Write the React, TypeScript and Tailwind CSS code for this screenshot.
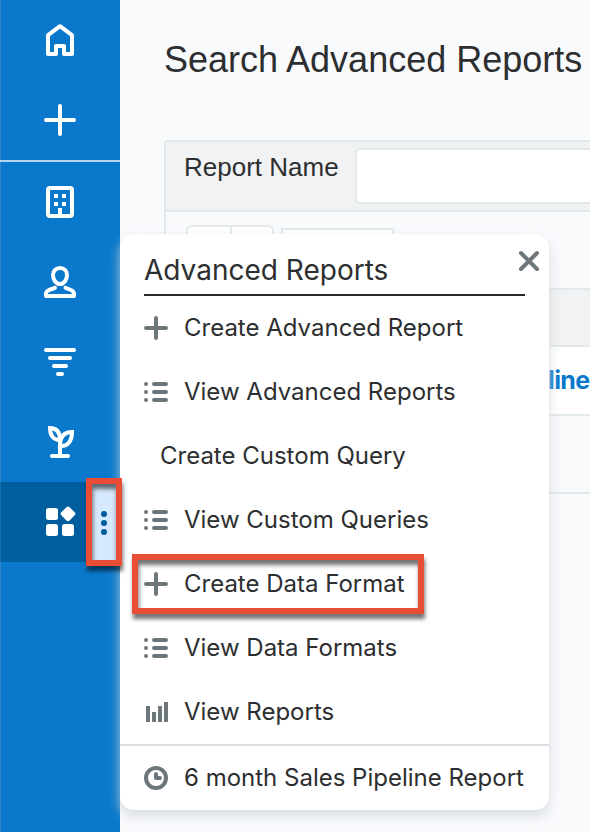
import type { ReactNode } from 'react';
import clsx from 'clsx';

const HomeIcon = () => (
    <svg className="h-8 w-8" viewBox="0 0 32 32" fill="none" stroke="white" strokeWidth="4" strokeLinejoin="round">
        <path d="M4 30V11.2L16 2.2L28 11.2V30H20V22H12V30Z" />
    </svg>
);

const AddIcon = () => (
    <svg className="h-8 w-8" viewBox="0 0 32 32" stroke="white" strokeWidth="4" strokeLinecap="round">
        <path d="M16 2V30M2 16H30" />
    </svg>
);

const BuildingIcon = () => (
    <svg className="h-8 w-8" viewBox="0 0 32 32" fill="none">
        <rect x="4" y="2" width="24" height="28" rx="2" stroke="white" strokeWidth="4" />
        <path d="M10 8h4v4h-4zM18 8h4v4h-4zM10 16h4v4h-4zM18 16h4v4h-4zM14 22h4v6h-4z" fill="white" />
    </svg>
);

const PersonIcon = () => (
    <svg className="h-8 w-8" viewBox="0 0 32 32" fill="none" stroke="white" strokeWidth="4" strokeLinecap="round" strokeLinejoin="round">
        <path d="M16 2C20 2 23 4.900 23 9C23 13.500 20 18 16 18C12 18 9 13.500 9 9C9 4.900 12 2 16 2Z" />
        <path d="M11 21.800L5 24Q2 25.200 2 28V30H30V28Q30 25.200 27 24L21.500 21.800" />
    </svg>
);

const FunnelIcon = () => (
    <svg className="h-8 w-8" viewBox="0 0 32 32" stroke="white" strokeWidth="4" strokeLinecap="round">
        <path d="M2 4H30M6 12H26M10 20H22M14 28H18" />
    </svg>
);

const PlantIcon = () => (
    <svg className="h-8 w-8" viewBox="0 0 32 32" fill="none" stroke="white" strokeWidth="4" strokeLinecap="round">
        <path d="M8 30H24M16 29V11" />
        <path d="M6 2C12 2 16 5.500 16 14C9.500 14 6 9.500 6 2Z" strokeLinecap="butt" />
        <path d="M28 6C20 6 16 10.500 16 20C23.500 21 28 15 28 6Z" strokeLinecap="butt" />
    </svg>
);

const AppsIcon = () => (
    <svg className="h-8 w-8" viewBox="0 0 32 32" fill="white">
        <rect x="2" y="2" width="12" height="12" rx="2.500" />
        <rect x="2" y="18" width="12" height="12" rx="2.500" />
        <rect x="18" y="18" width="12" height="12" rx="2.500" />
        <rect x="18.200" y="2" width="11.600" height="11.600" rx="2.200" transform="rotate(45 24 7.800)" />
    </svg>
);

const PlusIcon = () => (
    <svg className="h-6 w-6" viewBox="0 0 24 24" stroke="#6d767b" strokeWidth="4" strokeLinecap="round">
        <path d="M12 2V22M2 12H22" />
    </svg>
);

const ListIcon = () => (
    <svg className="h-6 w-6" viewBox="0 0 24 24" stroke="#6d767b" strokeWidth="4" strokeLinecap="round">
        <path d="M2 4H2.010M10 4H22M2 12H2.010M10 12H22M2 20H2.010M10 20H22" />
    </svg>
);

const ChartIcon = () => (
    <svg className="h-6 w-6" viewBox="0 0 24 24" fill="#6d767b">
        <path d="M2 6h4v16H2zM8 12h4v10H8zM14 6h4v16h-4zM20 2h4v20h-4z" />
    </svg>
);

const ClockIcon = () => (
    <svg className="h-6 w-6" viewBox="0 0 24 24" fill="none" stroke="#6d767b" strokeWidth="4">
        <circle cx="12" cy="12" r="10" />
        <path d="M12 8V12H16" strokeLinecap="round" strokeLinejoin="round" />
    </svg>
);

const navTop = [HomeIcon, AddIcon];
const navItems = [BuildingIcon, PersonIcon, FunnelIcon, PlantIcon];

type MenuItem = { label: string; icon?: ReactNode; highlighted?: boolean };

const menuItems: MenuItem[] = [
    { label: 'Create Advanced Report', icon: <PlusIcon /> },
    { label: 'View Advanced Reports', icon: <ListIcon /> },
    { label: 'Create Custom Query' },
    { label: 'View Custom Queries', icon: <ListIcon /> },
    { label: 'Create Data Format', icon: <PlusIcon />, highlighted: true },
    { label: 'View Data Formats', icon: <ListIcon /> },
    { label: 'View Reports', icon: <ChartIcon /> },
];

function Highlight({ className }: { className: string }) {
    return (
        <div
            className={clsx(
                'pointer-events-none absolute border-6 border-[#e94d35] shadow-[1px_5px_4px_rgba(0,0,0,0.55),inset_1px_5px_4px_rgba(0,0,0,0.55)]',
                className,
            )}
        />
    );
}

function Sidebar() {
    return (
        <nav className="flex w-[120px] shrink-0 flex-col bg-[#0a79cb] shadow-[inset_1px_0_0_#2f86cb]">
            <div className="border-b-2 border-[#b5d6f0]">
                {navTop.map((Icon, i) => (
                    <div key={i} className="flex h-20 items-center justify-center">
                        <Icon />
                    </div>
                ))}
            </div>
            {navItems.map((Icon, i) => (
                <div key={i} className="flex h-20 items-center justify-center">
                    <Icon />
                </div>
            ))}
            <div className="flex h-20 bg-[#005e9e] shadow-[inset_1px_0_0_#1a6ea8]">
                <div className="flex flex-1 items-center justify-end pr-3">
                    <AppsIcon />
                </div>
                <div className="flex w-8 flex-col items-center justify-center gap-[3px] bg-[#d6eaff] pt-0.5">
                    <span className="h-1.5 w-1.5 rounded-full bg-[#005e9e]" />
                    <span className="h-1.5 w-1.5 rounded-full bg-[#005e9e]" />
                    <span className="h-1.5 w-1.5 rounded-full bg-[#005e9e]" />
                </div>
            </div>
        </nav>
    );
}

function SearchPage() {
    return (
        <main className="min-w-0 flex-1 pl-11">
            <h1 className="h-[140px] pt-10 text-[36px] leading-10 whitespace-nowrap">Search Advanced Reports</h1>
            <div className="rounded-tl border-t-2 border-l-2 border-[#e2e9ea]">
                <div className="flex h-[70px] items-start border-b-2 border-[#e2e9ea] bg-[#f1f2f3] pt-1.5 pl-[18px]">
                    <label className="w-[171px] pt-1 text-[26px] leading-[30px]">Report Name</label>
                    <div className="h-14 flex-1 rounded-l-md border-2 border-r-0 border-[#e4e9eb] bg-white" />
                </div>
                <div className="flex h-[76px] items-start pt-[13px] pl-5">
                    <div className="flex h-12 w-[88px] rounded-md border-2 border-[#e4e9eb] bg-white">
                        <div className="w-[44px] border-r-2 border-[#e4e9eb]" />
                    </div>
                    <div className="mt-[3px] ml-[7px] h-11 w-[113px] border-2 border-[#e4e9eb] bg-white" />
                </div>
                <div className="h-[59px] border-y-2 border-[#e2e9ea] bg-[#f1f2f3]" />
                <div className="h-[69px] border-b-2 border-[#e2e9ea] bg-white pt-[17px] pl-[382px] font-[Inter,sans-serif] text-[25px] leading-8 font-bold tracking-tight text-[#0a79cb]">
                    line
                </div>
                <div className="h-[78px] border-b-2 border-[#e2e9ea]" />
            </div>
        </main>
    );
}

function ReportsMenu() {
    return (
        <div className="absolute top-[234px] left-[120px] h-[576px] w-[429px] rounded-[14px] bg-white font-[Inter,sans-serif] text-[24px] shadow-[0_6px_12px_#cfd5dacc]">
            <button className="absolute top-4 right-[9px]">
                <svg className="h-[22px] w-[22px]" viewBox="0 0 22 22" stroke="#6d767b" strokeWidth="4" strokeLinecap="round">
                    <path d="M3 3L19 19M19 3L3 19" />
                </svg>
            </button>
            <h2 className="mx-6 flex h-[62px] items-center border-b-2 border-[#29272a] pt-3 text-[28px]">Advanced Reports</h2>
            <ul>
                {menuItems.map((item) => (
                    <li key={item.label} className={clsx('relative flex h-16 items-center', item.icon ? 'gap-4 pl-6' : 'pl-10')}>
                        {item.icon}
                        <span className="whitespace-nowrap">{item.label}</span>
                        {item.highlighted && <Highlight className="top-[2px] left-3 h-[60px] w-[292px]" />}
                    </li>
                ))}
            </ul>
            <div className="flex h-[66px] items-center gap-4 border-t-2 border-[#d8dee2] pl-6">
                <ClockIcon />
                <span className="whitespace-nowrap">6 month Sales Pipeline Report</span>
            </div>
        </div>
    );
}

export default function App() {
    return (
        <div className="relative flex h-[832px] w-[590px] overflow-hidden bg-[#f9fafc] font-['Liberation_Sans',sans-serif] text-[#2d2e30]">
            <Sidebar />
            <SearchPage />
            <ReportsMenu />
            <Highlight className="top-[478px] left-[86px] h-[88px] w-9" />
        </div>
    );
}
